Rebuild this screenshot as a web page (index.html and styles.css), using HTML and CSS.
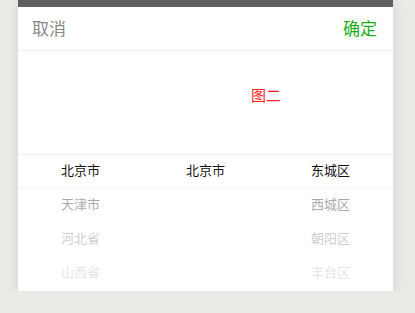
FILE: index.html
```html
<!DOCTYPE html>
<html lang="zh-CN">
  <head>
    <meta charset="UTF-8" />
    <title>城市选择</title>
    <link rel="stylesheet" href="styles.css">
  </head>
  <body>
    <div class="picker">
      <div class="picker-top"></div>
      <div class="picker-header">
        <span class="btn-cancel">取消</span>
        <span class="btn-ok">确定</span>
      </div>
      <div class="picker-title">
        <span>图二</span>
      </div>
      <div class="picker-body">
        <div class="picker-row selected">
          <span>北京市</span>
          <span>北京市</span>
          <span>东城区</span>
        </div>
        <div class="picker-row fade-1">
          <span>天津市</span>
          <span></span>
          <span>西城区</span>
        </div>
        <div class="picker-row fade-2">
          <span>河北省</span>
          <span></span>
          <span>朝阳区</span>
        </div>
        <div class="picker-row fade-3">
          <span>山西省</span>
          <span></span>
          <span>丰台区</span>
        </div>
      </div>
    </div>
  </body>
</html>
```

FILE: styles.css
```css
body {
  margin: 0;
  background-color: #ebeae6;
  font-family: "Noto Sans CJK SC", "Liberation Sans", sans-serif;
}
.picker {
  width: 375px;
  margin-left: 18px;
  background-color: #fff;
  box-shadow: 0 3px 12px rgba(0, 0, 0, 0.1);
}
.picker-top {
  height: 7px;
  background-color: #5f5f5f;
}
.picker-header {
  display: flex;
  justify-content: space-between;
  align-items: center;
  height: 44px;
  padding: 0 16px 2px 14px;
  box-sizing: border-box;
  border-bottom: 1px solid #f0f0f0;
  font-size: 17px;
  line-height: 20px;
}
.btn-cancel {
  color: #888;
}
.btn-ok {
  color: #1aad19;
}
.picker-title {
  height: 103px;
  box-sizing: border-box;
  padding: 35px 0 0 233px;
  color: #f22;
  font-size: 15px;
  line-height: 18px;
}
.picker-body {
  border-top: 1px solid #f0f0f0;
}
.picker-row {
  display: grid;
  grid-template-columns: 1fr 1fr 1fr;
  height: 34px;
  box-sizing: border-box;
  padding-bottom: 4px;
  align-items: center;
  text-align: center;
  font-size: 13px;
  line-height: 16px;
}
.picker-row.selected {
  color: #111;
  border-bottom: 1px solid #f5f5f5;
}
.picker-row.fade-1 {
  color: #aaa;
}
.picker-row.fade-2 {
  color: #cfcfcf;
}
.picker-row.fade-3 {
  color: #e6e6e6;
}
```
